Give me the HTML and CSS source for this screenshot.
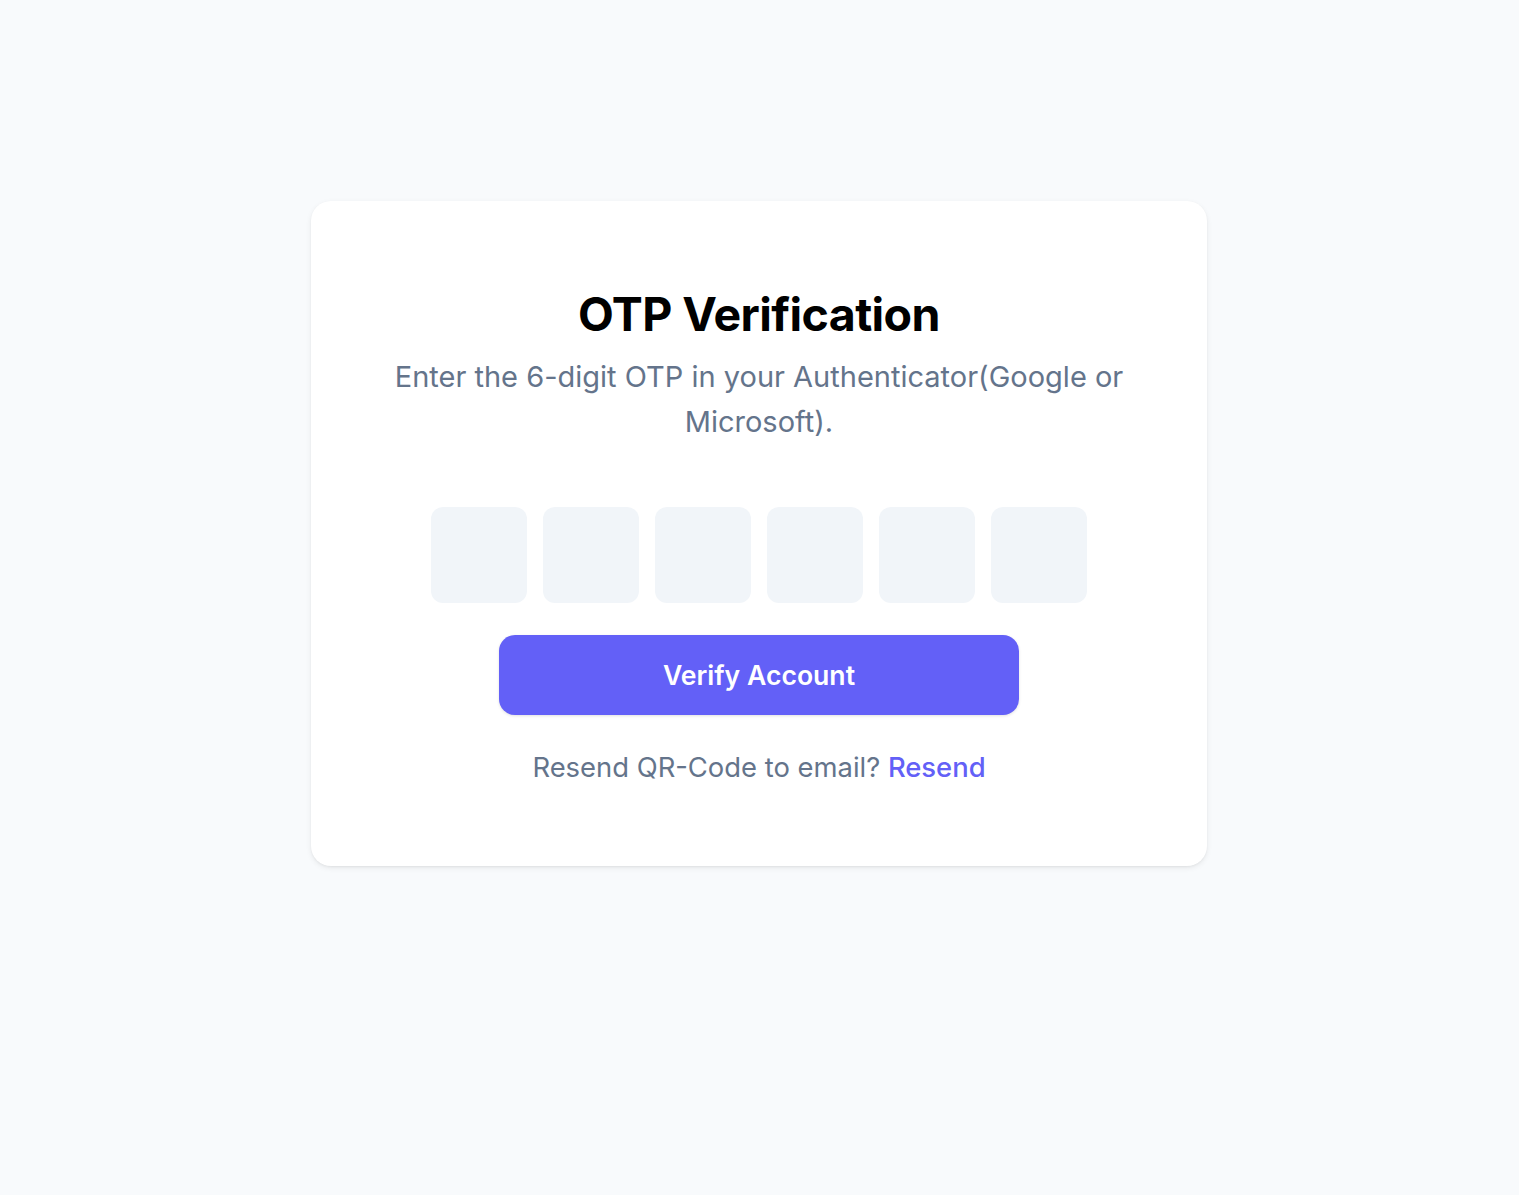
FILE: index.html
```html
<!DOCTYPE html>
<html lang="en">
<head>
<meta charset="utf-8">
<title>OTP Verification</title>
<link rel="stylesheet" href="styles.css">
</head>
<body>
<main class="page">
  <section class="card">
    <h1 class="title">OTP Verification</h1>
    <p class="subtitle">Enter the 6-digit OTP in your Authenticator(Google or Microsoft).</p>
    <form class="otp-form">
      <div class="otp-row">
        <input class="otp-box" type="text" maxlength="1" aria-label="Digit 1">
        <input class="otp-box" type="text" maxlength="1" aria-label="Digit 2">
        <input class="otp-box" type="text" maxlength="1" aria-label="Digit 3">
        <input class="otp-box" type="text" maxlength="1" aria-label="Digit 4">
        <input class="otp-box" type="text" maxlength="1" aria-label="Digit 5">
        <input class="otp-box" type="text" maxlength="1" aria-label="Digit 6">
      </div>
      <button class="verify-btn" type="button">Verify Account</button>
    </form>
    <p class="resend">Resend QR-Code to email? <a class="resend-link" href="#">Resend</a></p>
  </section>
</main>
</body>
</html>
```

FILE: styles.css
```css
* { box-sizing: border-box; }
html, body { margin: 0; padding: 0; }
body {
  background: #f8fafc;
  font-family: Inter, "Noto Sans", "Liberation Sans", sans-serif;
  min-height: 1195px;
}
.page {
  display: flex;
  justify-content: center;
  padding-top: 201px;
  padding-right: 1px;
}
.card {
  width: 896px;
  background: #ffffff;
  border-radius: 20px;
  box-shadow: 0 2px 6px -1px rgba(0,0,0,0.10), 0 1px 3px -1px rgba(0,0,0,0.08);
  padding: 83px 70px 79px;
  display: flex;
  flex-direction: column;
  align-items: center;
  text-align: center;
}
.title {
  margin: 0;
  font-size: 46.5px;
  line-height: 60px;
  font-weight: 700;
  color: #000000;
  letter-spacing: -0.6px;
}
.subtitle {
  margin: 10px 0 0;
  font-size: 29px;
  line-height: 45px;
  color: #64748b;
}
.otp-form {
  display: flex;
  flex-direction: column;
  align-items: center;
  margin-top: 63px;
}
.otp-row {
  display: flex;
  gap: 16px;
}
.otp-box {
  width: 96px;
  height: 96px;
  border: none;
  border-radius: 12px;
  background: #f1f5f9;
  font: inherit;
  font-size: 32px;
  text-align: center;
  outline: none;
}
.verify-btn {
  margin-top: 32px;
  width: 520px;
  height: 80px;
  border: none;
  border-radius: 16px;
  background: #6360f7;
  color: #ffffff;
  font-family: inherit;
  font-size: 26.6px;
  font-weight: 600;
  box-shadow: 0 1px 3px rgba(0,0,0,0.12);
  cursor: pointer;
}
.resend {
  margin: 32px 0 0;
  font-size: 27.4px;
  line-height: 40px;
  color: #64748b;
}
.resend-link {
  color: #6360f7;
  font-weight: 500;
  text-decoration: none;
}
```
